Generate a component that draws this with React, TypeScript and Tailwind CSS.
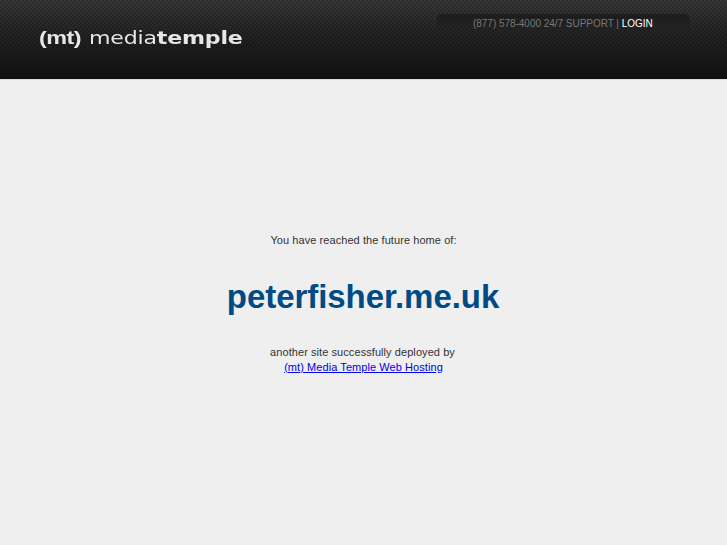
export default function App() {
  return (
    <div className="min-h-[545px] bg-[#efefef] font-['Liberation_Sans',Arial,sans-serif] text-[11px] tracking-[0.07px] text-[#333]">
      {/* header */}
      <header className="h-[80px] border-b border-[#dcdcdc] bg-[linear-gradient(#373737,#222_45%,#111)]">
        <div className="flex h-[79px] items-start justify-between bg-[repeating-conic-gradient(rgba(0,0,0,0.16)_0_25%,transparent_0_50%)] bg-[length:4px_4px] pl-[39px] pr-[37px]">
          <div className="mt-[25px] flex h-[26px] origin-left scale-x-[1.3] items-center gap-[6px] font-['DejaVu_Sans',sans-serif] text-[17px] leading-none tracking-[-0.15px] text-[#e6e6e6] blur-[0.3px]">
            <span className="font-['Liberation_Sans',sans-serif] text-[18px] font-bold tracking-[-0.4px]">(mt)</span>
            <span>
              media<span className="font-bold">temple</span>
            </span>
          </div>
          <div className="mt-[14px] h-[18px] w-[254px] rounded-t-[6px] bg-[linear-gradient(#1b1b1b,rgba(27,27,27,0))] pl-[37px] pt-[3px] text-[10px] leading-[14px] tracking-[-0.03px] text-[#777]">
            (877) 578-4000 24/7 SUPPORT | <a className="text-white">LOGIN</a>
          </div>
        </div>
      </header>

      {/* message */}
      <main className="pt-[152px] text-center">
        <p className="leading-[16px]">You have reached the future home of:</p>
        <h1 className="mt-[29px] pr-[1px] text-[33px] font-bold leading-[40px] tracking-[-0.05px] text-[#004b85]">peterfisher.me.uk</h1>
        <p className="mt-[28px] pr-[2px] leading-[15px]">another site successfully deployed by</p>
        <p className="leading-[15px]">
          <a href="#" className="text-[#00e] underline">(mt) Media Temple Web Hosting</a>
        </p>
      </main>
    </div>
  );
}
